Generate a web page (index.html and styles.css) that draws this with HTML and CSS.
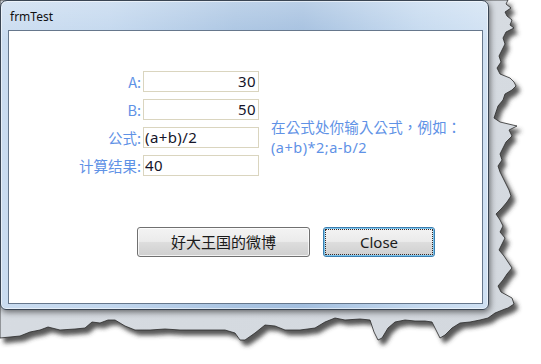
FILE: index.html
```html
<!DOCTYPE html>
<html>
<head>
<meta charset="utf-8">
<link rel="stylesheet" href="styles.css">
</head>
<body>
<div class="stage">
  <svg class="paper" width="541" height="364" viewBox="0 0 541 364">
    <defs>
      <filter id="sh" x="-10%" y="-10%" width="130%" height="130%">
        <feDropShadow dx="4" dy="5" stdDeviation="2" flood-color="#3a3a3a" flood-opacity="0.85"/>
      </filter>
      <linearGradient id="gr" x1="0" y1="0" x2="1" y2="1">
        <stop offset="0" stop-color="#d9dee4"/>
        <stop offset="1" stop-color="#d3d8de"/>
      </linearGradient>
    </defs>
    <polygon filter="url(#sh)" fill="url(#gr)" stroke="#2b2b2b" stroke-width="0.8"
      points="0,0 508,0 506,4 511,8 505,12 507,16 512,20 510,25 514,28 506,32 503,38 505,44 502,50 499,56 501,62 497,68 500,74 510,78 514,82 516,86 512,90 505,94 503,100 498,106 496,112 494,118 500,122 517,126 509,130 512,136 506,142 503,148 500,154 502,160 498,166 500,172 503,178 506,184 509,190 511,196 507,202 502,208 496,214 500,220 503,226 500,232 505,238 502,244 499,250 504,256 508,262 512,268 507,274 503,280 498,286 501,292 512,298 514,304 508,308 505,309 495,313 488,318 480,320 470,322 460,323 452,328 445,335 440,338 436,330 432,322 425,321 415,321 405,320 395,322 388,328 382,338 378,340 374,332 370,320 360,319 345,320 335,318 325,322 315,328 300,330 285,330 275,326 265,325 255,333 245,340 240,340 235,333 225,330 210,330 195,330 180,330 165,329 150,330 135,330 125,326 115,320 108,320 100,323 92,322 85,328 75,329 60,330 48,327 40,330 30,332 20,336 10,337 0,338"/>
  </svg>

  <div class="window">
    <div class="titlebar"><span class="title">frmTest</span></div>
    <div class="client">
      <div class="form">
        <div class="fields">
          <label class="lbl">A:</label><div class="box right">30</div>
          <label class="lbl">B:</label><div class="box right">50</div>
          <label class="lbl">公式:</label><div class="box">(a+b)/2</div>
          <label class="lbl">计算结果:</label><div class="box">40</div>
        </div>
        <div class="hint">在公式处你输入公式，例如：<br><span class="formula">(a+b)*2;a-b/2</span></div>
      </div>
      <div class="buttons">
        <button class="btn wide">好大王国的微博</button>
        <button class="btn close focused">Close</button>
      </div>
    </div>
  </div>
</div>
</body>
</html>
```

FILE: styles.css
```css
html, body {
  margin: 0;
  padding: 0;
  background: #ffffff;
}

.stage {
  position: relative;
  width: 541px;
  height: 364px;
  overflow: hidden;
}

.paper {
  position: absolute;
  left: 0;
  top: 0;
  z-index: 0;
}

.window {
  position: relative;
  z-index: 1;
  width: 489px;
  height: 310px;
  box-sizing: border-box;
  border: 1px solid #3a4553;
  border-radius: 7px 7px 6px 6px;
  background:
    linear-gradient(180deg, rgba(255,255,255,0.25) 0px, rgba(255,255,255,0) 40px),
    linear-gradient(90deg, #cadcf0 0%, #c2d7ee 22%, #a9c4e2 48%, #a3bfdf 62%, #c4d9ef 86%, #d0e1f3 100%);
  box-shadow: inset 0 0 0 1px rgba(255,255,255,0.55), 1px 2px 6px rgba(0,0,0,0.55);
  display: flex;
  flex-direction: column;
}

.titlebar {
  height: 29px;
  display: flex;
  align-items: center;
  padding-left: 9px;
  box-sizing: border-box;
}

.title {
  font-family: "Noto Sans", "Liberation Sans", sans-serif;
  font-size: 12px;
  color: #111;
  margin-top: 1px;
}

.client {
  flex: 1;
  margin: 0 5px 5px 7px;
  border: 1px solid #66778c;
  background: #ffffff;
  display: flex;
  flex-direction: column;
}

.form {
  display: flex;
  align-items: flex-start;
  padding-top: 40px;
  padding-left: 52px;
}

.fields {
  display: grid;
  grid-template-columns: 80px 116px;
  grid-auto-rows: 21px;
  column-gap: 2px;
  row-gap: 7px;
}

.lbl {
  font-family: "Noto Sans CJK SC", sans-serif;
  font-size: 14.5px;
  color: #5f92e6;
  text-align: right;
  line-height: 21px;
  white-space: nowrap;
}

.box {
  box-sizing: border-box;
  height: 21px;
  border: 1px solid #dad5bf;
  font-family: "Noto Sans", "Liberation Sans", sans-serif;
  font-size: 15px;
  letter-spacing: 0.4px;
  color: #15152a;
  line-height: 19px;
  padding: 0 1px 0 1px;
}

.box.right {
  text-align: right;
  padding-right: 2px;
}

.hint {
  margin-left: 12px;
  margin-top: 46px;
  font-family: "Noto Sans CJK TC", sans-serif;
  font-size: 14.5px;
  letter-spacing: 0.15px;
  line-height: 20px;
  color: #5f92e6;
  white-space: nowrap;
}

.formula {
  font-family: "Noto Sans", sans-serif;
  letter-spacing: 0.5px;
}

.buttons {
  display: flex;
  gap: 13px;
  padding-left: 128px;
  margin-top: 51px;
}

.btn {
  position: relative;
  height: 30px;
  box-sizing: border-box;
  border: 1px solid #707070;
  border-radius: 3px;
  background: linear-gradient(180deg, #f3f3f3 0%, #ebebeb 48%, #dddddd 52%, #cfcfcf 100%);
  box-shadow: inset 0 0 0 1px rgba(255,255,255,0.75);
  font-family: "Noto Sans", "Noto Sans CJK SC", sans-serif;
  font-size: 15px;
  color: #1b1b1b;
  padding: 0;
  margin: 0;
  line-height: 26px;
}

.btn.wide {
  width: 173px;
  font-family: "Noto Sans CJK SC", sans-serif;
}

.btn.close {
  width: 112px;
}

.btn.focused {
  border-color: #3c7fb1;
  box-shadow: inset 0 0 0 1px #7cc6ee;
}

.btn.focused::after {
  content: "";
  position: absolute;
  left: 1px;
  top: 1px;
  right: 1px;
  bottom: 1px;
  border: 1px dotted #3a2a2a;
}
```
